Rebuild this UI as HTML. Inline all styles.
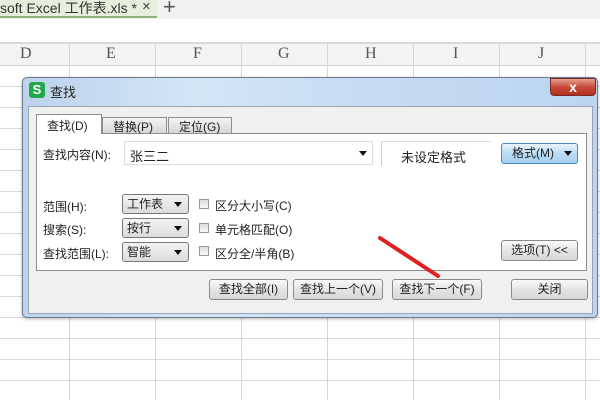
<!DOCTYPE html>
<html><head><meta charset="utf-8"><style>
*{margin:0;padding:0;box-sizing:border-box}
body{width:600px;height:400px;overflow:hidden;background:#fff;position:relative;font-family:"Liberation Sans","Noto Sans CJK SC",sans-serif;font-size:12px;color:#222}
.a{position:absolute}
.v{position:absolute;top:44px;width:1px;height:356px;background:#d6d6d6}
.btn{position:absolute;border:1px solid #8a8a8a;border-radius:3px;background:linear-gradient(#fafafa,#e4e4e4 50%,#d8d8d8);text-align:center;font-size:12px;line-height:19px;color:#222}
.combo{position:absolute;border:1px solid #777;border-radius:3px;background:linear-gradient(#f4f4f4,#dcdcdc);font-size:12px;line-height:18px;padding-left:4px}
.combo:after{content:"";position:absolute;right:6px;top:7px;border:4px solid transparent;border-top:5px solid #111;border-bottom:0}
.cb{position:absolute;width:10px;height:10px;border:1px solid #999;background:linear-gradient(#ddd,#f8f8f8)}
.lbl{position:absolute;font-size:12px;white-space:nowrap}
.col{position:absolute;top:45px;font-family:'Liberation Serif',serif;font-size:16px;color:#555}
</style></head><body>
<div class="a" style="left:0;top:0;width:600px;height:19px;background:#f2f2f2"></div>
<div class="a" style="left:0;top:0;width:157px;height:18px;background:#e6efdb;border-bottom:2px solid #8db078"></div>
<div class="lbl" style="left:0;top:-2px;font-size:14px;color:#333">soft Excel 工作表.xls *</div>
<div class="lbl" style="left:142px;top:-2px;font-size:15px;color:#444">×</div>
<div class="lbl" style="left:163px;top:-6px;font-size:22px;color:#555">+</div>
<div class="a" style="left:0;top:42px;width:600px;height:2px;background:#d9d9d9"></div>
<div class="a" style="left:0;top:44px;width:600px;height:22px;background:#f3f3f3;border-bottom:1px solid #d0d0d0"></div>
<div class="a" style="left:0;top:66px;width:600px;height:334px;background:repeating-linear-gradient(180deg,transparent 0 20px,#dadada 20px 21px)"></div>
<div class="v" style="left:69px"></div><div class="v" style="left:155px"></div><div class="v" style="left:241px"></div><div class="v" style="left:327px"></div><div class="v" style="left:413px"></div><div class="v" style="left:499px"></div><div class="v" style="left:585px"></div>
<div class="col" style="left:20px">D</div>
<div class="col" style="left:106px">E</div>
<div class="col" style="left:193px">F</div>
<div class="col" style="left:278px">G</div>
<div class="col" style="left:365px">H</div>
<div class="col" style="left:453px">I</div>
<div class="col" style="left:538px">J</div>
<div class="a" style="left:22px;top:77px;width:576px;height:241px;border:1px solid #6c7c90;border-radius:5px;background:linear-gradient(90deg,#bcd3ec,#d4e5f6 30%,#c6dcf2 60%,#bcd4ee);box-shadow:0 1px 3px rgba(0,0,0,.3)"></div>
<div class="a" style="left:29px;top:82px;width:16px;height:16px;background:#20a84a;border-radius:3px;color:#fff;font-weight:bold;font-size:13px;line-height:16px;text-align:center">S</div>
<div class="lbl" style="left:50px;top:82px;font-size:13px">查找</div>
<div class="a" style="left:550px;top:78px;width:46px;height:18px;border:1px solid #7a2a2a;border-radius:0 0 4px 4px;background:linear-gradient(#e6a090,#c84a3a 50%,#b03020);color:#fff;text-align:center;font-weight:bold;font-size:14px;line-height:16px">x</div>
<div class="a" style="left:28px;top:106px;width:565px;height:208px;background:#f0f0f0;border:1px solid #9aa6b4"></div>
<div class="a" style="left:36px;top:133px;width:551px;height:138px;background:#fff;border:1px solid #8e8e8e"></div>
<div class="a" style="left:36px;top:114px;width:66px;height:20px;background:#fff;border:1px solid #8e8e8e;border-bottom:none"></div>
<div class="lbl" style="left:47px;top:117px">查找(D)</div>
<div class="a" style="left:102px;top:117px;width:65px;height:17px;background:linear-gradient(#f4f4f4,#d6d6d6);border:1px solid #8e8e8e"></div>
<div class="lbl" style="left:113px;top:118px">替换(P)</div>
<div class="a" style="left:168px;top:117px;width:64px;height:17px;background:linear-gradient(#f4f4f4,#d6d6d6);border:1px solid #8e8e8e"></div>
<div class="lbl" style="left:179px;top:118px">定位(G)</div>
<div class="lbl" style="left:43px;top:146px">查找内容(N):</div>
<div class="a" style="left:124px;top:141px;width:249px;height:24px;border:1px solid #ddd;background:#fff"></div>
<div class="lbl" style="left:130px;top:146px;font-size:13px">张三二</div>
<div class="a" style="left:359px;top:151px;border:4px solid transparent;border-top:5px solid #111;border-bottom:0"></div>
<div class="a" style="left:381px;top:141px;width:110px;height:25px;border-left:1px solid #ccc;border-top:1px solid #ddd;background:#fff"></div>
<div class="lbl" style="left:401px;top:147px;font-size:13px">未设定格式</div>
<div class="btn" style="left:501px;top:143px;width:77px;height:21px;border-color:#4a8ac0;background:linear-gradient(#e8f4fd,#bcdcf4 50%,#a6d0f0);text-align:left;padding-left:10px">格式(M)</div>
<div class="a" style="left:564px;top:151px;border:4px solid transparent;border-top:5px solid #111;border-bottom:0"></div>
<div class="lbl" style="left:43px;top:198px">范围(H):</div>
<div class="combo" style="left:122px;top:194px;width:67px;height:20px">工作表</div>
<div class="cb" style="left:199px;top:199px"></div>
<div class="lbl" style="left:215px;top:197px">区分大小写(C)</div>
<div class="lbl" style="left:43px;top:221px">搜索(S):</div>
<div class="combo" style="left:122px;top:218px;width:67px;height:20px">按行</div>
<div class="cb" style="left:199px;top:223px"></div>
<div class="lbl" style="left:215px;top:221px">单元格匹配(O)</div>
<div class="lbl" style="left:43px;top:245px">查找范围(L):</div>
<div class="combo" style="left:122px;top:242px;width:67px;height:20px">智能</div>
<div class="cb" style="left:199px;top:246px"></div>
<div class="lbl" style="left:215px;top:245px">区分全/半角(B)</div>
<div class="btn" style="left:501px;top:240px;width:77px;height:21px">选项(T) &lt;&lt;</div>
<div class="btn" style="left:209px;top:279px;width:79px;height:21px">查找全部(I)</div>
<div class="btn" style="left:293px;top:279px;width:90px;height:21px">查找上一个(V)</div>
<div class="btn" style="left:392px;top:279px;width:90px;height:21px">查找下一个(F)</div>
<div class="btn" style="left:511px;top:279px;width:77px;height:21px">关闭</div>
<svg class="a" style="left:0;top:0" width="600" height="400"><line x1="380" y1="238" x2="438" y2="276" stroke="#e02020" stroke-width="4" stroke-linecap="round"/></svg>
</body></html>
